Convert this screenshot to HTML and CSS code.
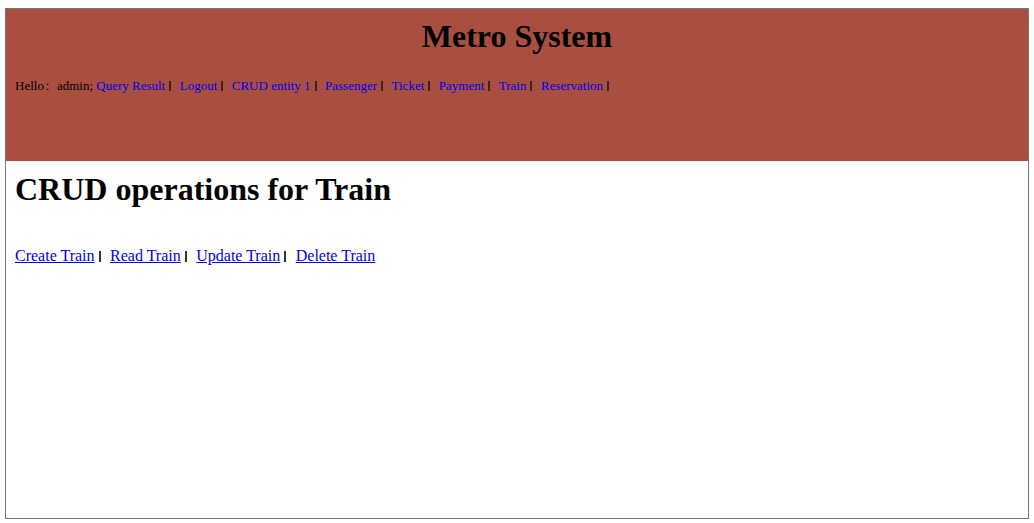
FILE: index.html
```html
<!DOCTYPE html>
<html>
<head>
<meta charset="utf-8">
<title>Metro System</title>
<link rel="stylesheet" href="styles.css">
</head>
<body>
<div class="frame">
  <div class="header">
    <h1 class="title">Metro System</h1>
    <div class="nav">Hello<span class="colon">：</span>admin; <a href="#">Query Result</a><span class="sep">|</span><a href="#">Logout</a><span class="sep">|</span><a href="#">CRUD entity 1</a><span class="sep">|</span><a href="#">Passenger</a><span class="sep">|</span><a href="#">Ticket</a><span class="sep">|</span><a href="#">Payment</a><span class="sep">|</span><a href="#">Train</a><span class="sep">|</span><a href="#">Reservation</a><span class="sep">|</span></div>
  </div>
  <div class="content">
    <h1 class="heading">CRUD operations for Train</h1>
    <div class="links"><a href="#" class="ul">Create Train</a><span class="sep">|</span><a href="#" class="ul">Read Train</a><span class="sep">|</span><a href="#" class="ul">Update Train</a><span class="sep">|</span><a href="#" class="ul">Delete Train</a></div>
  </div>
</div>
</body>
</html>
```
FILE: styles.css
```css
html, body {
  margin: 0;
  padding: 0;
  background: #fff;
}
body {
  padding: 8px 5px 4px 5px;
  font-family: "Liberation Serif", "Times New Roman", serif;
  color: #000;
}
.frame {
  border: 1px solid #767676;
  height: 509px;
  box-sizing: content-box;
}
.header {
  background: #a84f40;
  height: 152px;
  padding: 0 9px;
}
.title {
  margin: 0;
  padding-top: 9px;
  font-size: 32px;
  font-weight: bold;
  text-align: center;
  line-height: 37px;
}
.nav {
  margin-top: 23px;
  font-size: 13px;
  line-height: 15px;
}
.colon {
  font-family: "Noto Sans CJK SC", sans-serif;
  font-size: 10px;
  display: inline-block;
  width: 12px;
  padding-left: 1px;
}
.nav a {
  color: #0000ee;
  text-decoration: none;
}
.nav .sep {
  display: inline-block;
  width: 2px;
  height: 10px;
  overflow: hidden;
  color: transparent;
  background: #3a2420;
  margin: 0 8.5px 0 4px;
  vertical-align: -1px;
  line-height: 10px;
  font-size: 10px;
}
.content {
  padding: 0 9px;
}
.heading {
  margin: 10px 0 0 0;
  font-size: 32px;
  font-weight: bold;
  line-height: 37px;
}
.links {
  margin-top: 39px;
  font-size: 16px;
  line-height: 18px;
}
.links a {
  color: #0000ee;
  text-decoration: underline;
}
.links .sep {
  display: inline-block;
  width: 2px;
  height: 11px;
  overflow: hidden;
  color: transparent;
  background: #333;
  margin: 0 9.5px 0 4px;
  vertical-align: -1px;
  line-height: 11px;
  font-size: 11px;
}
```
